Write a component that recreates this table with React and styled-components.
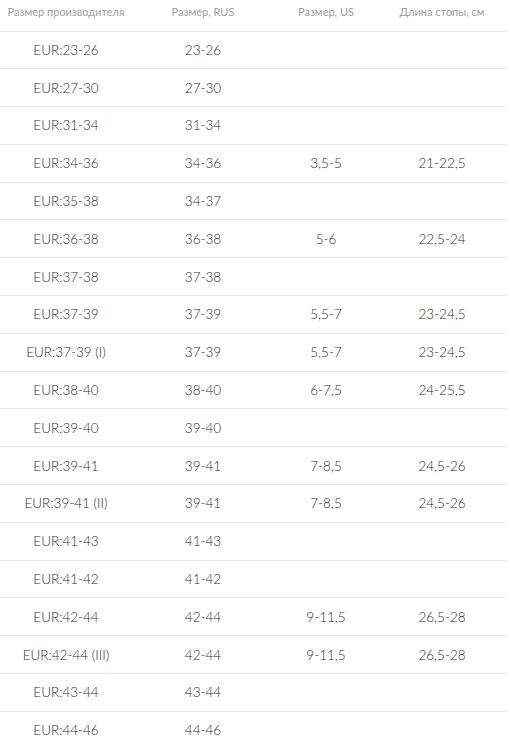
import React from "react";
import styled, { createGlobalStyle } from "styled-components";

const Global = createGlobalStyle`
  html, body { margin: 0; padding: 0; background: #fff; }
  body { font-family: Lato, "Noto Sans", sans-serif; }
`;

const Table = styled.table`
  width: 506px;
  border-collapse: collapse;
  table-layout: fixed;
`;

const Col = styled.col`
  width: ${(p) => p.$w}px;
`;

const HeadCell = styled.th`
  height: 31px;
  padding: 4px 0 0;
  box-sizing: border-box;
  vertical-align: top;
  font-weight: 400;
  font-size: 11px;
  line-height: 15px;
  color: #a0a0a0;
  text-align: center;
  white-space: nowrap;
  border-bottom: 1px solid #e3e3e3;
`;

const Row = styled.tr`
  height: 37.8px;
  border-bottom: 1px solid #e3e3e3;
  &:last-child { border-bottom: none; }
`;

const Cell = styled.td`
  padding: 0;
  text-align: center;
  vertical-align: middle;
  font-size: 13.5px;
  font-weight: 300;
  color: #2e2e2e;
  white-space: nowrap;
`;

const rows = [
  ["EUR:23-26", "23-26", "", ""],
  ["EUR:27-30", "27-30", "", ""],
  ["EUR:31-34", "31-34", "", ""],
  ["EUR:34-36", "34-36", "3,5-5", "21-22,5"],
  ["EUR:35-38", "34-37", "", ""],
  ["EUR:36-38", "36-38", "5-6", "22,5-24"],
  ["EUR:37-38", "37-38", "", ""],
  ["EUR:37-39", "37-39", "5,5-7", "23-24,5"],
  ["EUR:37-39 (I)", "37-39", "5,5-7", "23-24,5"],
  ["EUR:38-40", "38-40", "6-7,5", "24-25,5"],
  ["EUR:39-40", "39-40", "", ""],
  ["EUR:39-41", "39-41", "7-8,5", "24,5-26"],
  ["EUR:39-41 (II)", "39-41", "7-8,5", "24,5-26"],
  ["EUR:41-43", "41-43", "", ""],
  ["EUR:41-42", "41-42", "", ""],
  ["EUR:42-44", "42-44", "9-11,5", "26,5-28"],
  ["EUR:42-44 (III)", "42-44", "9-11,5", "26,5-28"],
  ["EUR:43-44", "43-44", "", ""],
  ["EUR:44-46", "44-46", "", ""],
];

export default function App() {
  return (
    <>
      <Global />
      <Table>
        <colgroup>
          <Col $w={132} />
          <Col $w={142} />
          <Col $w={104} />
          <Col $w={128} />
        </colgroup>
        <thead>
          <tr>
            <HeadCell>Размер производителя</HeadCell>
            <HeadCell>Размер, RUS</HeadCell>
            <HeadCell>Размер, US</HeadCell>
            <HeadCell>Длина стопы, см</HeadCell>
          </tr>
        </thead>
        <tbody>
          {rows.map((r, i) => (
            <Row key={i}>
              {r.map((c, j) => (
                <Cell key={j}>{c}</Cell>
              ))}
            </Row>
          ))}
        </tbody>
      </Table>
    </>
  );
}
